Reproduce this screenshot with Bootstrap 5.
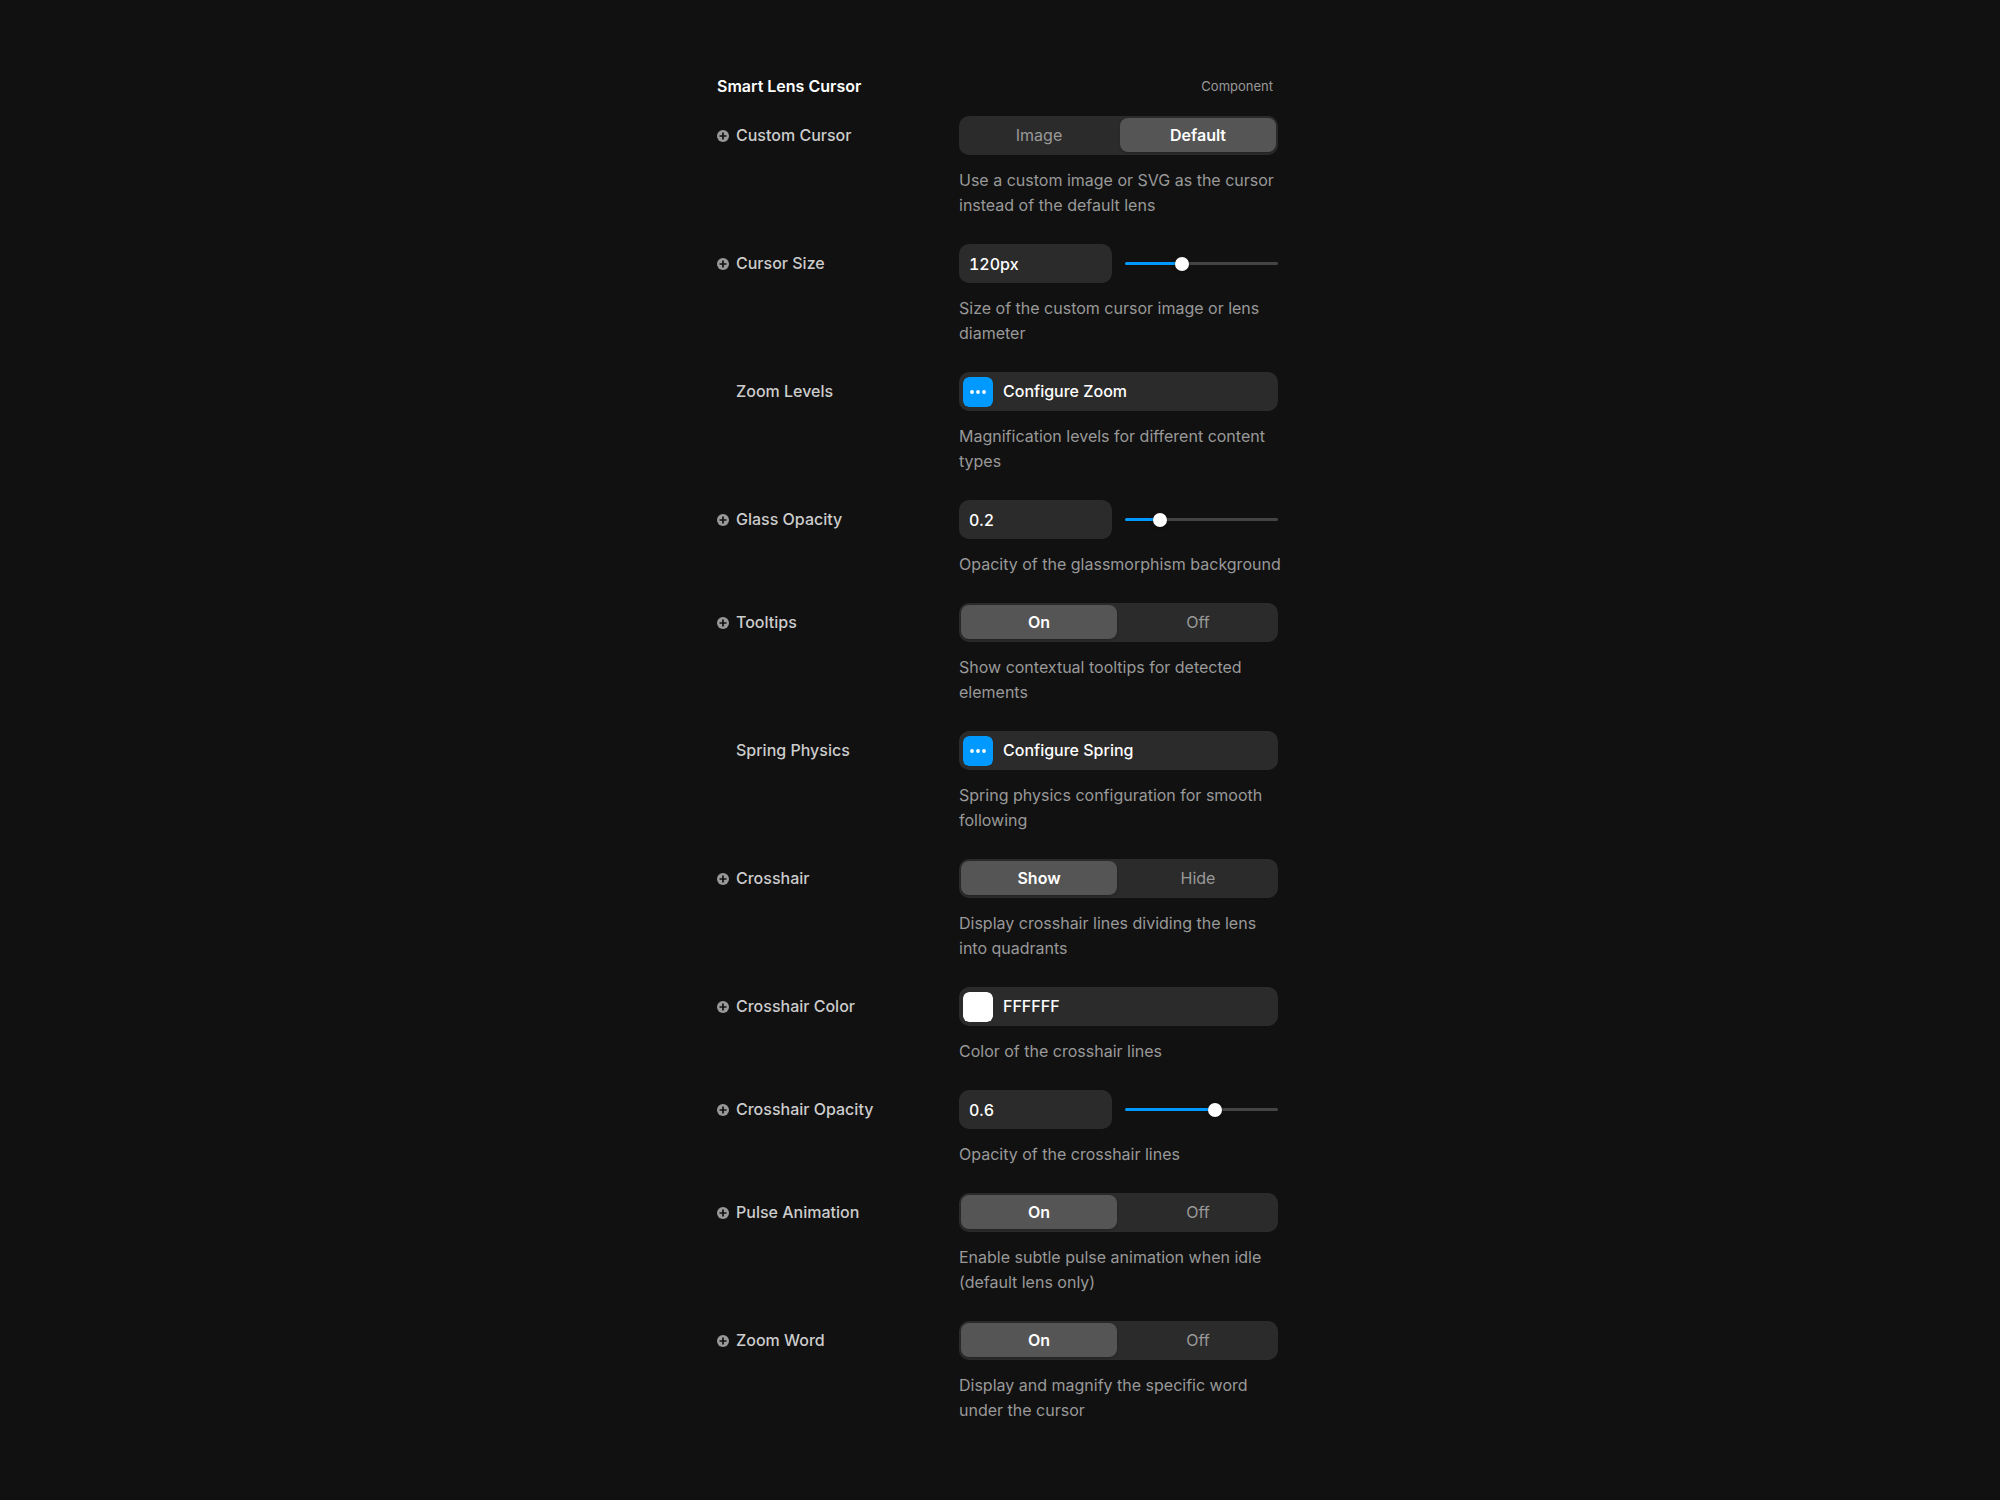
<!DOCTYPE html>
<html lang="en" data-bs-theme="dark">
<head>
<meta charset="utf-8">
<meta name="viewport" content="width=device-width, initial-scale=1">
<title>Smart Lens Cursor</title>
<link href="https://cdn.jsdelivr.net/npm/bootstrap@5.3.0/dist/css/bootstrap.min.css" rel="stylesheet">
<style>
  body { background: #111; color: #ccc; font-family: Inter, "Liberation Sans", sans-serif; font-size: 16px; line-height: 25px; }
  .panel { max-width: 600px; padding: 74px 22px 74px 17px; }
  .panel-head { padding-right: 5px; margin-bottom: 17px; }
  .panel-title { font-size: 16px; line-height: 25px; font-weight: 600; color: #fff; }
  .panel-kind { font-size: 13px; color: #999; }
  .prop { margin-bottom: 26px; }
  .prop-name { height: 39px; gap: 7px; font-weight: 500; color: #ccc; }
  .prop-name svg, .no-icon { width: 12px; height: 12px; flex: none; }
  .prop-control { width: 319px; flex: none; }
  .prop-help { margin: 13px -6px 0 0; color: #999; }
  .field { height: 39px; background: #2b2b2b; border: 0; border-radius: 10px; color: #fff; font-weight: 500; }
  .field-text { width: 153px; padding: 0 10px; font-variant-numeric: tabular-nums; }
  .segments { height: 39px; padding: 2px 2px 3px; gap: 3px; background: #2b2b2b; border-radius: 10px; }
  .segments .btn { flex: 1 1 0; padding: 0; border: 0; border-radius: 8px; font-size: 16px; line-height: 35px; color: #999; }
  .segments .btn-check:checked + .btn { background: #555; color: #fff; font-weight: 600; box-shadow: 0 1px 2px #0003; }
  .field-wide { padding: 0 5px 0 4px; gap: 10px; }
  .field-wide svg, .swatch { width: 30px; height: 30px; flex: none; border-radius: 6px; }
  .swatch { border: 0; padding: 0; background: none; appearance: none; }
  .swatch::-webkit-color-swatch-wrapper { padding: 0; }
  .swatch::-webkit-color-swatch { border: 0; border-radius: 6px; }
  .hex { border: 0; padding: 0; background: none; color: inherit; font-weight: 500; min-width: 0; }
  .slider { appearance: none; height: 14px; min-width: 0; margin: 0; background: none; }
  .slider::-webkit-slider-runnable-track { height: 3px; border-radius: 2px;
    background: linear-gradient(to right, #09f calc(7px + (100% - 14px) * var(--fill)), #444 0); }
  .slider::-webkit-slider-thumb { appearance: none; width: 14px; height: 14px; margin-top: -5px; border-radius: 50%; background: #fff; box-shadow: 0 1px 3px #0006; }
</style>
</head>
<body>
<svg class="d-none" aria-hidden="true">
  <symbol id="plus" viewBox="0 0 12 12"><circle cx="6" cy="6" r="6" fill="#999"/><path d="M6 2.5v7M2.5 6h7" stroke="#111" stroke-width="1.7"/></symbol>
  <symbol id="dots" viewBox="0 0 30 30"><rect width="30" height="30" rx="6" fill="#09f"/><g fill="#fff"><circle cx="9" cy="15" r="1.9"/><circle cx="15" cy="15" r="1.9"/><circle cx="21" cy="15" r="1.9"/></g></symbol>
</svg>
<main class="panel mx-auto">
  <header class="panel-head d-flex justify-content-between align-items-center">
    <h1 class="panel-title mb-0">Smart Lens Cursor</h1>
    <span class="panel-kind">Component</span>
  </header>

  <div class="prop d-flex justify-content-between">
    <div class="prop-name d-flex align-items-center"><svg><use href="#plus"/></svg><span id="n-cursor">Custom Cursor</span></div>
    <div class="prop-control">
      <div class="segments d-flex" role="radiogroup" aria-labelledby="n-cursor">
        <input class="btn-check" type="radio" name="cursor" id="cursor-a"><label class="btn" for="cursor-a">Image</label>
        <input class="btn-check" type="radio" name="cursor" id="cursor-b" checked><label class="btn" for="cursor-b">Default</label>
      </div>
      <p class="prop-help">Use a custom image or SVG as the cursor instead of the default lens</p>
    </div>
  </div>

  <div class="prop d-flex justify-content-between">
    <label class="prop-name d-flex align-items-center" for="size"><svg><use href="#plus"/></svg>Cursor Size</label>
    <div class="prop-control">
      <div class="d-flex align-items-center justify-content-between">
        <input class="field field-text" type="text" id="size" value="120px">
        <input class="slider field-text p-0" type="range" aria-label="Cursor Size" min="20" max="300" value="120" style="--fill:.357">
      </div>
      <p class="prop-help">Size of the custom cursor image or lens diameter</p>
    </div>
  </div>

  <div class="prop d-flex justify-content-between">
    <label class="prop-name d-flex align-items-center" for="zoom"><span class="no-icon"></span>Zoom Levels</label>
    <div class="prop-control">
      <button class="field field-wide w-100 d-flex align-items-center" type="button" id="zoom"><svg><use href="#dots"/></svg>Configure Zoom</button>
      <p class="prop-help">Magnification levels for different content types</p>
    </div>
  </div>

  <div class="prop d-flex justify-content-between">
    <label class="prop-name d-flex align-items-center" for="glass"><svg><use href="#plus"/></svg>Glass Opacity</label>
    <div class="prop-control">
      <div class="d-flex align-items-center justify-content-between">
        <input class="field field-text" type="text" id="glass" value="0.2">
        <input class="slider field-text p-0" type="range" aria-label="Glass Opacity" min="0" max="1" step="0.1" value="0.2" style="--fill:.2">
      </div>
      <p class="prop-help">Opacity of the glassmorphism background</p>
    </div>
  </div>

  <div class="prop d-flex justify-content-between">
    <div class="prop-name d-flex align-items-center"><svg><use href="#plus"/></svg><span id="n-tips">Tooltips</span></div>
    <div class="prop-control">
      <div class="segments d-flex" role="radiogroup" aria-labelledby="n-tips">
        <input class="btn-check" type="radio" name="tips" id="tips-a" checked><label class="btn" for="tips-a">On</label>
        <input class="btn-check" type="radio" name="tips" id="tips-b"><label class="btn" for="tips-b">Off</label>
      </div>
      <p class="prop-help">Show contextual tooltips for detected elements</p>
    </div>
  </div>

  <div class="prop d-flex justify-content-between">
    <label class="prop-name d-flex align-items-center" for="spring"><span class="no-icon"></span>Spring Physics</label>
    <div class="prop-control">
      <button class="field field-wide w-100 d-flex align-items-center" type="button" id="spring"><svg><use href="#dots"/></svg>Configure Spring</button>
      <p class="prop-help">Spring physics configuration for smooth following</p>
    </div>
  </div>

  <div class="prop d-flex justify-content-between">
    <div class="prop-name d-flex align-items-center"><svg><use href="#plus"/></svg><span id="n-cross">Crosshair</span></div>
    <div class="prop-control">
      <div class="segments d-flex" role="radiogroup" aria-labelledby="n-cross">
        <input class="btn-check" type="radio" name="cross" id="cross-a" checked><label class="btn" for="cross-a">Show</label>
        <input class="btn-check" type="radio" name="cross" id="cross-b"><label class="btn" for="cross-b">Hide</label>
      </div>
      <p class="prop-help">Display crosshair lines dividing the lens into quadrants</p>
    </div>
  </div>

  <div class="prop d-flex justify-content-between">
    <label class="prop-name d-flex align-items-center" for="hex"><svg><use href="#plus"/></svg>Crosshair Color</label>
    <div class="prop-control">
      <div class="field field-wide d-flex align-items-center">
        <input class="swatch" type="color" value="#ffffff" aria-label="Pick crosshair color">
        <input class="hex flex-grow-1" type="text" id="hex" value="FFFFFF">
      </div>
      <p class="prop-help">Color of the crosshair lines</p>
    </div>
  </div>

  <div class="prop d-flex justify-content-between">
    <label class="prop-name d-flex align-items-center" for="crossop"><svg><use href="#plus"/></svg>Crosshair Opacity</label>
    <div class="prop-control">
      <div class="d-flex align-items-center justify-content-between">
        <input class="field field-text" type="text" id="crossop" value="0.6">
        <input class="slider field-text p-0" type="range" aria-label="Crosshair Opacity" min="0" max="1" step="0.1" value="0.6" style="--fill:.6">
      </div>
      <p class="prop-help">Opacity of the crosshair lines</p>
    </div>
  </div>

  <div class="prop d-flex justify-content-between">
    <div class="prop-name d-flex align-items-center"><svg><use href="#plus"/></svg><span id="n-pulse">Pulse Animation</span></div>
    <div class="prop-control">
      <div class="segments d-flex" role="radiogroup" aria-labelledby="n-pulse">
        <input class="btn-check" type="radio" name="pulse" id="pulse-a" checked><label class="btn" for="pulse-a">On</label>
        <input class="btn-check" type="radio" name="pulse" id="pulse-b"><label class="btn" for="pulse-b">Off</label>
      </div>
      <p class="prop-help">Enable subtle pulse animation when idle (default lens only)</p>
    </div>
  </div>

  <div class="prop d-flex justify-content-between mb-0">
    <div class="prop-name d-flex align-items-center"><svg><use href="#plus"/></svg><span id="n-word">Zoom Word</span></div>
    <div class="prop-control">
      <div class="segments d-flex" role="radiogroup" aria-labelledby="n-word">
        <input class="btn-check" type="radio" name="word" id="word-a" checked><label class="btn" for="word-a">On</label>
        <input class="btn-check" type="radio" name="word" id="word-b"><label class="btn" for="word-b">Off</label>
      </div>
      <p class="prop-help">Display and magnify the specific word under the cursor</p>
    </div>
  </div>
</main>
<script src="https://cdn.jsdelivr.net/npm/bootstrap@5.3.0/dist/js/bootstrap.bundle.min.js"></script>
</body>
</html>
